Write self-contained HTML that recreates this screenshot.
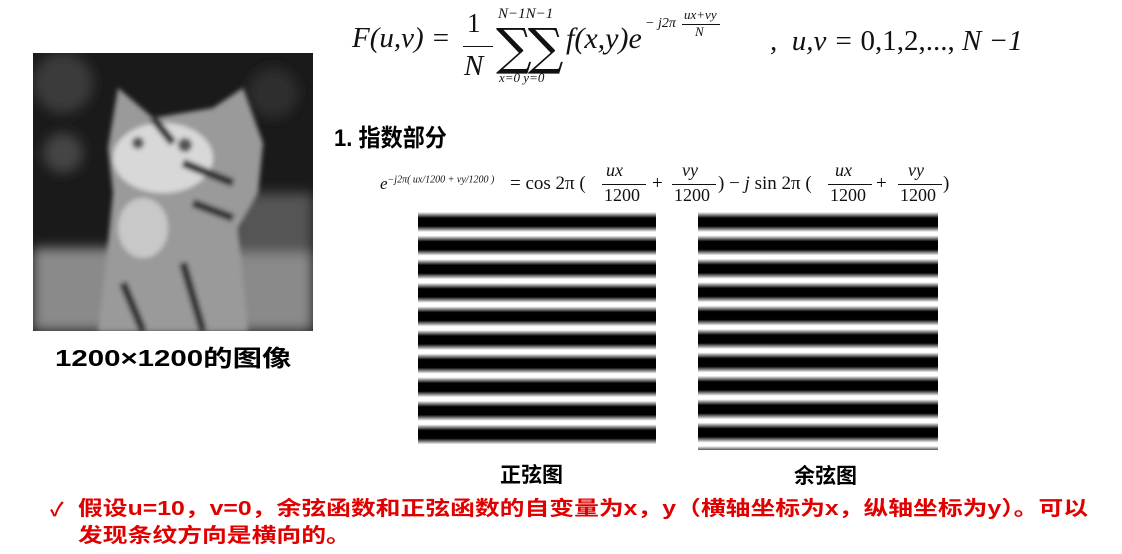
<!DOCTYPE html>
<html><head><meta charset="utf-8"><style>
body{margin:0;width:1122px;height:554px;background:#fff;position:relative;overflow:hidden;font-family:"Liberation Sans","Noto Sans CJK SC",sans-serif}
.a{position:absolute;white-space:nowrap}
.m{font-family:"Liberation Serif","DejaVu Serif",serif;font-style:italic;color:#111}
.b{font-weight:bold}
.sx{transform-origin:left top}
</style></head><body>
<svg class="a" style="left:33px;top:53px" width="280" height="278" viewBox="0 0 280 278">
<defs><filter id="bl"><feGaussianBlur stdDeviation="6"/></filter><filter id="bl2"><feGaussianBlur stdDeviation="2.5"/></filter></defs>
<rect width="280" height="278" fill="#1a1a1a"/>
<g filter="url(#bl)">
<circle cx="30" cy="30" r="30" fill="#3a3a3a"/><circle cx="240" cy="40" r="25" fill="#2e2e2e"/>
<circle cx="30" cy="100" r="20" fill="#444"/>
<rect x="0" y="195" width="280" height="83" fill="#8a8a8a"/>
<rect x="200" y="140" width="80" height="60" fill="#555"/>
</g>
<g filter="url(#bl2)">
<path d="M85 35 L120 65 L180 55 L210 35 L230 90 L225 140 L205 175 L215 278 L65 278 L75 190 L80 140 L75 95 Z" fill="#9a9a9a"/>
<ellipse cx="130" cy="105" rx="50" ry="35" fill="#d8d8d8"/>
<ellipse cx="110" cy="175" rx="25" ry="30" fill="#c8c8c8"/>
<path d="M150 110 L200 130 M120 65 L140 90 M160 150 L200 165 M90 230 L110 278 M150 210 L170 278" stroke="#333" stroke-width="8"/>
<circle cx="105" cy="90" r="6" fill="#555"/><circle cx="152" cy="92" r="7" fill="#555"/>
</g>
</svg>
<div class="a b sx" style="left:55px;top:339px;font-size:23px;color:#000;transform:scaleX(1.28)">1200×1200的图像</div>

<div class="a m" style="left:352px;top:22px;font-size:29px">F(u,v) =</div>
<div class="a m" style="left:467px;top:8px;font-size:27px;font-style:normal">1</div>
<div class="a" style="left:463px;top:46px;width:30px;border-top:1.5px solid #111"></div>
<div class="a m" style="left:464px;top:50px;font-size:29px">N</div>
<div class="a m" style="left:498px;top:6px;font-size:15px">N−1N−1</div>
<div class="a" style="left:496px;top:18px;font-size:50px;font-family:'DejaVu Serif',serif;color:#111;letter-spacing:-4px">∑∑</div>
<div class="a m" style="left:499px;top:70px;font-size:13px">x=0 y=0</div>
<div class="a m" style="left:566px;top:22px;font-size:30px">f(x,y)e</div>
<div class="a m" style="left:645px;top:16px;font-size:14px">− j2π</div>
<div class="a m" style="left:684px;top:7px;font-size:13px">ux+vy</div>
<div class="a" style="left:682px;top:24px;width:38px;border-top:1px solid #111"></div>
<div class="a m" style="left:695px;top:24px;font-size:13px">N</div>
<div class="a m" style="left:770px;top:25px;font-size:29px">,&nbsp; u,v = <span style="font-style:normal">0,1,2,...,</span> N −1</div>

<div class="a b sx" style="left:334px;top:118px;font-size:24px;color:#000;transform:scaleX(0.92)">1. 指数部分</div>
<div class="a m" style="left:380px;top:174px;font-size:17px">e<sup style="font-size:10px">−j2π( ux/1200 + vy/1200 )</sup></div>
<div class="a m" style="left:510px;top:173px;font-size:19px"><span style="font-style:normal">= cos 2π (</span></div>
<div class="a m" style="left:606px;top:160px;font-size:18px">ux</div><div class="a" style="left:602px;top:184px;width:44px;border-top:1px solid #111"></div><div class="a m" style="left:604px;top:185px;font-size:18px;font-style:normal">1200</div>
<div class="a" style="left:652px;top:173px;font-size:19px;font-family:'Liberation Serif',serif">+</div>
<div class="a m" style="left:682px;top:160px;font-size:18px">vy</div><div class="a" style="left:672px;top:184px;width:44px;border-top:1px solid #111"></div><div class="a m" style="left:674px;top:185px;font-size:18px;font-style:normal">1200</div>
<div class="a m" style="left:718px;top:173px;font-size:19px"><span style="font-style:normal">) − </span>j<span style="font-style:normal"> sin 2π (</span></div>
<div class="a m" style="left:835px;top:160px;font-size:18px">ux</div><div class="a" style="left:828px;top:184px;width:44px;border-top:1px solid #111"></div><div class="a m" style="left:830px;top:185px;font-size:18px;font-style:normal">1200</div>
<div class="a" style="left:876px;top:173px;font-size:19px;font-family:'Liberation Serif',serif">+</div>
<div class="a m" style="left:908px;top:160px;font-size:18px">vy</div><div class="a" style="left:898px;top:184px;width:44px;border-top:1px solid #111"></div><div class="a m" style="left:900px;top:185px;font-size:18px;font-style:normal">1200</div>
<div class="a m" style="left:943px;top:173px;font-size:19px;font-style:normal">)</div>

<div class="a" style="left:418px;top:212px;width:238px;height:236px;background:repeating-linear-gradient(180deg,#fff 0px,#000 6px,#000 14px,#fff 20px,#fff 23.6px)"></div>
<div class="a" style="left:698px;top:212px;width:240px;height:238px;background:repeating-linear-gradient(180deg,#fff 0px,#000 6px,#000 14px,#fff 20px,#fff 23.4px)"></div>
<div class="a b" style="left:500px;top:459px;font-size:21px;color:#000">正弦图</div>
<div class="a b" style="left:794px;top:460px;font-size:21px;color:#000">余弦图</div>

<div class="a b" style="left:50px;top:495px;font-size:19px;color:#e00000">✓</div>
<div class="a b sx" style="left:78px;top:496px;font-size:20px;color:#e00000;line-height:27px;transform:scaleX(1.24)">假设u=10，v=0，余弦函数和正弦函数的自变量为x，y（横轴坐标为x，纵轴坐标为y）。可以<br>发现条纹方向是横向的。</div>
</body></html>
